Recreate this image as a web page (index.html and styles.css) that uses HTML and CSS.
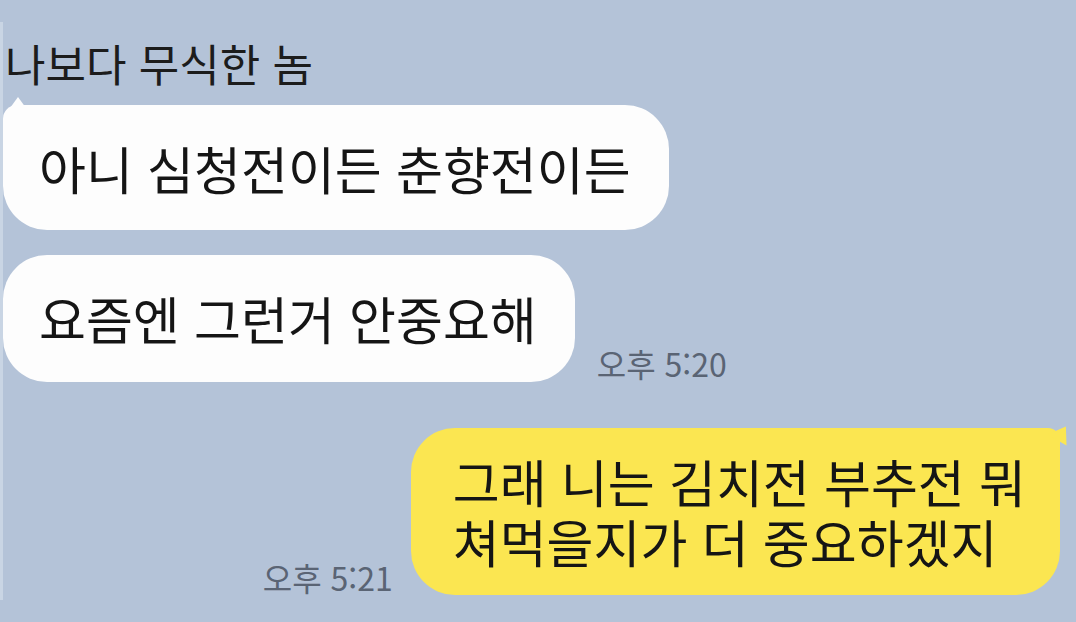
FILE: index.html
```html
<!DOCTYPE html>
<html lang="ko">
<head>
    <meta charset="UTF-8">
    <meta name="viewport" content="width=device-width, initial-scale=1.0">
    <title>채팅</title>
    <link rel="stylesheet" href="styles.css">
</head>
<body>
    <div class="chat">
        <div class="received">
            <div class="sender">나보다 무식한 놈</div>
            <div class="row top">
                <div class="bubble white first">아니 심청전이든 춘향전이든</div>
            </div>
            <div class="row">
                <div class="bubble white">요즘엔 그런거 안중요해</div>
                <span class="time">오후 5:20</span>
            </div>
        </div>

        <div class="sent">
            <div class="row mine">
                <span class="time">오후 5:21</span>
                <div class="bubble yellow first">
                    <div>그래 니는 김치전 부추전 뭐</div>
                    <div>쳐먹을지가 더 중요하겠지</div>
                </div>
            </div>
        </div>
    </div>
</body>
</html>
```

FILE: styles.css
```css
body {
    margin: 0;
    background-color: #b4c3d8;
    font-family: "Noto Sans CJK KR", "Noto Sans", sans-serif;
    color: #151515;
}
.chat {
    margin-top: 22px;
    height: 578px;
    border-left: 3px solid #c9d5e4;
    padding-right: 16px;
}
.sender {
    font-size: 44px;
    line-height: 48px;
    padding: 17px 0 0 2px;
    color: #1c1c1c;
}
.row {
    display: flex;
    align-items: flex-end;
    margin-top: 25px;
}
.row.top {
    margin-top: 18px;
}
.bubble {
    position: relative;
    font-size: 51px;
    line-height: 62px;
    border-radius: 44px;
}
.white {
    background-color: #fdfdfd;
    padding: 32px 38px 33px 36px;
}
.white.first {
    padding-bottom: 31px;
    border-top-left-radius: 14px;
}
.white.first::before {
    content: "";
    position: absolute;
    top: -8px;
    left: 7px;
    border-left: 8px solid transparent;
    border-right: 8px solid transparent;
    border-bottom: 11px solid #fdfdfd;
}
.time {
    font-size: 32px;
    line-height: 36px;
    color: #5a6474;
    margin: 0 0 1px 22px;
    white-space: nowrap;
}
.sent .row {
    justify-content: flex-end;
    margin-top: 46px;
}
.mine .time {
    margin: 0 18px 0 0;
}
.yellow {
    background-color: #fbe651;
    line-height: 60px;
    padding: 23px 34px 24px 42px;
    border-top-right-radius: 12px;
}
.yellow.first::after {
    content: "";
    position: absolute;
    top: -3px;
    right: -12px;
    border-left: 12px solid transparent;
    border-right: 10px solid transparent;
    border-bottom: 16px solid #fbe651;
    transform: rotate(30deg);
}
```
